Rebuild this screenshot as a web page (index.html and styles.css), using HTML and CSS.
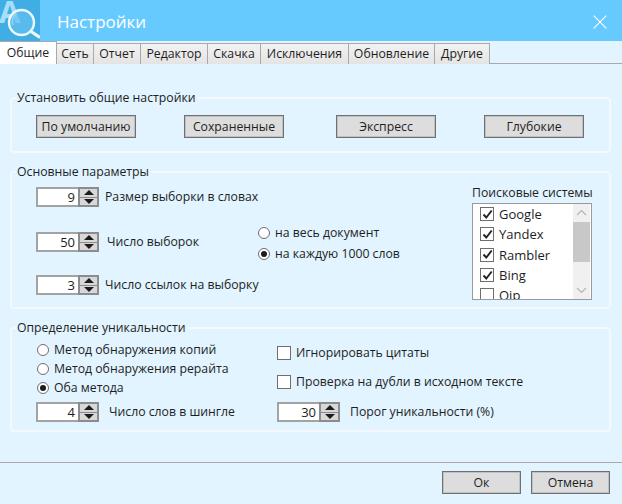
FILE: index.html
```html
<!DOCTYPE html>
<html lang="ru">
<head>
<meta charset="utf-8">
<title>Настройки</title>
<link rel="stylesheet" href="styles.css">
</head>
<body>
<div class="window">
  <header class="titlebar">
    <svg class="logo" width="40" height="41" viewBox="0 0 40 41">
      <rect width="40" height="41" fill="#40ade4"/>
      <text x="-1" y="23" class="logo-a">A</text>
      <circle cx="21.5" cy="22.5" r="12.5" fill="#62c0ee" fill-opacity=".7" stroke="#eef9ff" stroke-width="2.4"/>
      <path d="M13 25a9.500 9.500 0 0 1 3-11" fill="none" stroke="#8ad4f5" stroke-width="2"/>
      <path d="M31 31.500 40 37.500" stroke="#eef9ff" stroke-width="3.200"/>
    </svg>
    <h1 class="title">Настройки</h1>
    <svg class="close" width="14" height="14" viewBox="0 0 14 14"><path d="M.7.7 13.300 13.300M13.300.7.700 13.300" stroke="#fff" stroke-width="1.100"/></svg>
  </header>

  <nav class="tabs">
    <span class="tab active">Общие</span>
    <span class="tab t2">Сеть</span>
    <span class="tab t3">Отчет</span>
    <span class="tab t4">Редактор</span>
    <span class="tab t5">Скачка</span>
    <span class="tab t6">Исключения</span>
    <span class="tab t7">Обновление</span>
    <span class="tab t8">Другие</span>
  </nav>

  <main class="content">
    <fieldset class="group presets">
      <legend>Установить общие настройки</legend>
      <button class="btn" type="button">По умолчанию</button>
      <button class="btn" type="button">Сохраненные</button>
      <button class="btn" type="button">Экспресс</button>
      <button class="btn" type="button">Глубокие</button>
    </fieldset>

    <fieldset class="group params">
      <legend>Основные параметры</legend>
      <div class="spin-col">
        <div class="spin-row">
          <div class="spin"><span class="spin-value">9</span><span class="spin-btns"><i class="up"></i><i class="down"></i></span></div>
          <span>Размер выборки в словах</span>
        </div>
        <div class="spin-row second">
          <div class="spin"><span class="spin-value">50</span><span class="spin-btns"><i class="up"></i><i class="down"></i></span></div>
          <span class="shift">Число выборок</span>
        </div>
        <div class="spin-row third">
          <div class="spin"><span class="spin-value">3</span><span class="spin-btns"><i class="up"></i><i class="down"></i></span></div>
          <span>Число ссылок на выборку</span>
        </div>
      </div>
      <div class="scope">
        <div class="opt"><span class="radio"></span>на весь документ</div>
        <div class="opt"><span class="radio on"></span>на каждую 1000 слов</div>
      </div>
      <div class="engines">
        <div class="engines-title">Поисковые системы</div>
        <div class="listbox">
          <div class="items">
            <div class="item"><span class="check on"><svg width="11" height="11" viewBox="0 0 11 11"><path d="M1.500 5.500 4.300 8.500 9.700 1.500" fill="none" stroke="#222" stroke-width="1.900"/></svg></span>Google</div>
            <div class="item"><span class="check on"><svg width="11" height="11" viewBox="0 0 11 11"><path d="M1.500 5.500 4.300 8.500 9.700 1.500" fill="none" stroke="#222" stroke-width="1.900"/></svg></span>Yandex</div>
            <div class="item"><span class="check on"><svg width="11" height="11" viewBox="0 0 11 11"><path d="M1.500 5.500 4.300 8.500 9.700 1.500" fill="none" stroke="#222" stroke-width="1.900"/></svg></span>Rambler</div>
            <div class="item"><span class="check on"><svg width="11" height="11" viewBox="0 0 11 11"><path d="M1.500 5.500 4.300 8.500 9.700 1.500" fill="none" stroke="#222" stroke-width="1.900"/></svg></span>Bing</div>
            <div class="item"><span class="check"></span>Qip</div>
          </div>
          <div class="scrollbar">
            <svg width="17" height="18" viewBox="0 0 17 18"><path d="M4 11 8.500 6.500 13 11" fill="none" stroke="#b5b5b5" stroke-width="1.200"/></svg>
            <div class="thumb"></div>
            <svg class="sb-down" width="17" height="18" viewBox="0 0 17 18"><path d="M4 7 8.500 11.500 13 7" fill="none" stroke="#b5b5b5" stroke-width="1.200"/></svg>
          </div>
        </div>
      </div>
    </fieldset>

    <fieldset class="group unique">
      <legend>Определение уникальности</legend>
      <div class="uniq-left">
        <div class="opt tight"><span class="radio"></span>Метод обнаружения копий</div>
        <div class="opt tight"><span class="radio"></span>Метод обнаружения рерайта</div>
        <div class="opt tight"><span class="radio on"></span>Оба метода</div>
        <div class="spin-row s4">
          <div class="spin"><span class="spin-value">4</span><span class="spin-btns"><i class="up"></i><i class="down"></i></span></div>
          <span class="shift2">Число слов в шингле</span>
        </div>
      </div>
      <div class="uniq-right">
        <div class="opt c1"><span class="check"></span>Игнорировать цитаты</div>
        <div class="opt c2"><span class="check"></span>Проверка на дубли в исходном тексте</div>
        <div class="spin-row s5">
          <div class="spin"><span class="spin-value">30</span><span class="spin-btns"><i class="up"></i><i class="down"></i></span></div>
          <span class="shift3">Порог уникальности (%)</span>
        </div>
      </div>
    </fieldset>
  </main>

  <footer class="footer">
    <button class="btn wide" type="button">Ок</button>
    <button class="btn wide" type="button">Отмена</button>
  </footer>
</div>
</body>
</html>
```
FILE: styles.css
```css
* { box-sizing: border-box; }
html, body { margin: 0; padding: 0; }
body {
  width: 622px;
  height: 504px;
  overflow: hidden;
  background: #e1f4ff;
  color: #1e1e1e;
  font: 12.25px/16px "Open Sans", "Noto Sans", sans-serif;
}
.window { display: flex; flex-direction: column; height: 504px; }

.titlebar {
  display: flex;
  align-items: center;
  flex: none;
  height: 41px;
  padding-top: 2px;
  background: #66caff;
}
.logo { flex: none; display: block; margin-top: -2px; }
.logo-a { font: 700 31px "Open Sans", sans-serif; fill: #a5def6; }
.title {
  margin: 0 0 0 17px;
  font-size: 17px;
  font-weight: 400;
  line-height: 22px;
  color: #fff;
}
.close { margin-left: auto; margin-right: 15px; }

.tabs {
  display: flex;
  flex: none;
  height: 23px;
  padding-top: 1px;
  border-bottom: 1px solid #a9a9a9;
}
.tab {
  height: 21px;
  width: 37px;
  margin-top: 1px;
  border: 1px solid #a9a9a9;
  border-bottom: 0;
  border-left: 0;
  background: linear-gradient(#f2f2f2, #e4e4e4);
  text-align: center;
  line-height: 19px;
}
.tab.active {
  width: 57px;
  height: 23px;
  margin-top: -1px;
  background: #fff;
  border-top-color: #a9a9a9;
  line-height: 22px;
}
.t3 { width: 47px; }
.t4 { width: 67px; }
.t5 { width: 53px; }
.t6 { width: 88px; }
.t7 { width: 86px; }
.t8 { width: 55px; }

.content {
  flex: 1;
  padding: 26px 11px 0 10px;
  display: flex;
  flex-direction: column;
  gap: 11px;
}
.group {
  margin: 0;
  min-width: 0;
  padding: 0;
  border: 2px solid #f3f9fd;
  border-radius: 4px;
}
.group legend {
  margin-left: -20px;
  padding: 0 2px 0 1px;
  line-height: 16px;
}

.btn {
  width: 100px;
  height: 23px;
  padding: 0;
  border: 1px solid #707070;
  outline: 1px solid rgba(112, 112, 112, .25);
  outline-offset: -2px;
  background: #dddddd;
  color: #1e1e1e;
  font: inherit;
}

.presets {
  display: flex;
  height: 63px;
  padding: 9px 0 0 24px;
}
.presets .btn + .btn { margin-left: 48px; }
.presets .btn:nth-child(4) { margin-left: 52px; }

.params {
  display: flex;
  height: 145px;
  padding: 7px 0 0 24px;
}
.spin-col { width: 221px; flex: none; }
.spin-row { display: flex; align-items: center; gap: 6px; white-space: nowrap; }
.second { margin-top: 25px; }
.third { margin-top: 23px; }
.shift { margin-left: 2px; }
.shift2 { margin-left: 4px; }
.shift3 { margin-left: 4px; }

.spin { display: flex; width: 63px; height: 20px; flex: none; }
.spin-value {
  width: 42px;
  padding-right: 3px;
  background: #fff;
  border: 2px solid #a3a3a3;
  border-right: 0;
  text-align: right;
  line-height: 16px;
  font-size: 13px;
}
.spin-btns {
  display: flex;
  flex-direction: column;
  width: 21px;
  border: 2px solid #8c8c8c;
  background: #d8d8d8;
}
.spin-btns i {
  flex: 1;
  display: flex;
  align-items: center;
  justify-content: center;
}
.spin-btns i::before {
  content: "";
  border-left: 5px solid transparent;
  border-right: 5px solid transparent;
}
.up { border-bottom: 1px solid #8c8c8c; }
.up::before { border-bottom: 5px solid #1c1c1c; }
.down::before { border-top: 5px solid #1c1c1c; }

.scope { width: 215px; flex: none; padding-top: 35px; }
.opt { display: flex; align-items: center; gap: 5px; height: 21px; }
.radio {
  position: relative;
  flex: none;
  width: 12px;
  height: 12px;
  margin-left: 1px;
  border: 1px solid #6e6e6e;
  border-radius: 50%;
  background: #fff;
}
.radio.on::after {
  content: "";
  position: absolute;
  left: 2px;
  top: 2px;
  width: 6px;
  height: 6px;
  border-radius: 50%;
  background: #1c1c1c;
}
.check {
  display: flex;
  align-items: center;
  justify-content: center;
  flex: none;
  width: 14px;
  height: 14px;
  border: 1px solid #6e6e6e;
  background: #fff;
}
.engines { width: 122px; flex: none; margin-top: -2px; }
.engines-title { line-height: 16px; white-space: nowrap; }
.listbox {
  display: flex;
  justify-content: space-between;
  width: 120px;
  height: 97px;
  margin-top: 2px;
  overflow: hidden;
  border: 1px solid #9a9a9a;
  background: #fff;
}
.items { padding: 0 0 0 7px; }
.item {
  display: flex;
  align-items: center;
  gap: 5px;
  height: 20.300px;
  font-size: 13px;
}
.scrollbar {
  display: flex;
  flex-direction: column;
  width: 17px;
  margin-right: 1px;
  background: #f0f0f0;
}
.thumb { height: 40px; background: #c8c8c8; }
.sb-down { margin-top: auto; }

.unique {
  display: flex;
  height: 112px;
  padding: 4px 0 0 24px;
}
.uniq-left { width: 241px; flex: none; }
.opt.tight { height: 19px; }
.s4 { margin-top: 5px; }
.uniq-right { flex: 1; }
.c1 { margin-top: 2px; }
.c2 { margin-top: 8px; }
.s5 { margin-top: 10px; }

.footer {
  display: flex;
  justify-content: flex-end;
  gap: 10px;
  flex: none;
  height: 42px;
  padding: 8px 12px 0 0;
  border-top: 1px solid #a9a9a9;
}
.btn.wide { width: 79px; }
```
